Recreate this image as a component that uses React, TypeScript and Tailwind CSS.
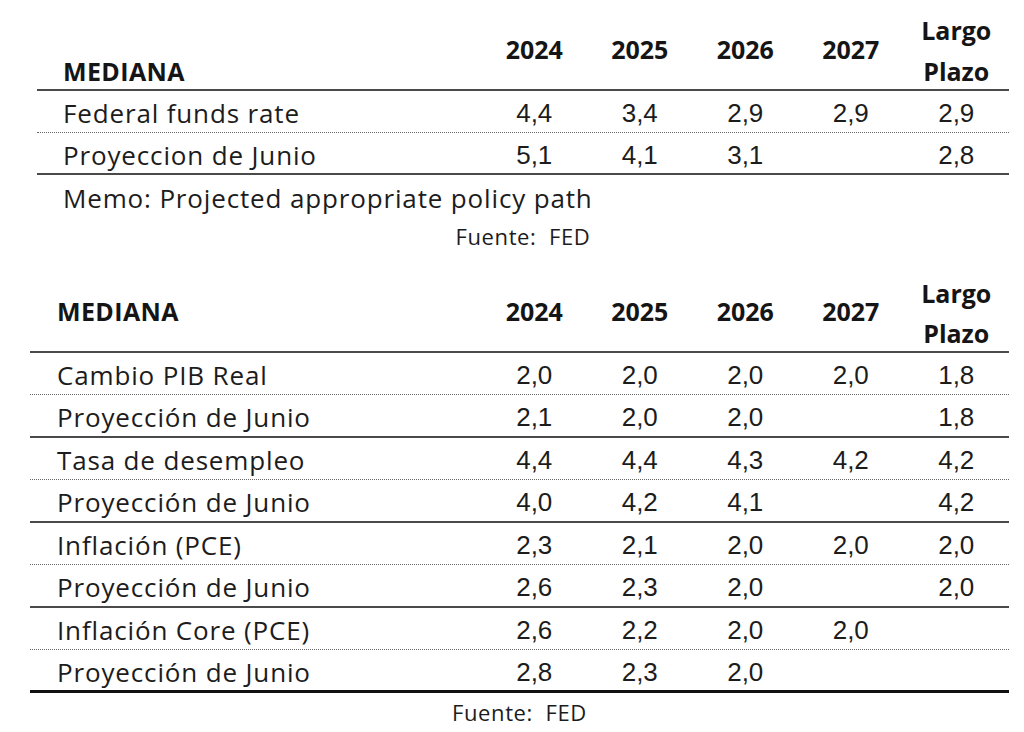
const labelFont = "font-['Open_Sans',sans-serif] text-[26px] tracking-[0.85px] text-[#1c1c1c]";
const boldFont = "font-['Open_Sans',sans-serif] font-bold text-[25px] text-[#151515]";
const numFont = "font-['Liberation_Sans',Arial,sans-serif] text-[26px] text-[#1c1c1c]";

const years = ["2024", "2025", "2026", "2027"];

type Row = { label: string; values: string[] };

const fedRows: Row[] = [
    { label: "Federal funds rate", values: ["4,4", "3,4", "2,9", "2,9", "2,9"] },
    { label: "Proyeccion de Junio", values: ["5,1", "4,1", "3,1", "", "2,8"] },
];

const macroRows: Row[] = [
    { label: "Cambio PIB Real", values: ["2,0", "2,0", "2,0", "2,0", "1,8"] },
    { label: "Proyección de Junio", values: ["2,1", "2,0", "2,0", "", "1,8"] },
    { label: "Tasa de desempleo", values: ["4,4", "4,4", "4,3", "4,2", "4,2"] },
    { label: "Proyección de Junio", values: ["4,0", "4,2", "4,1", "", "4,2"] },
    { label: "Inflación (PCE)", values: ["2,3", "2,1", "2,0", "2,0", "2,0"] },
    { label: "Proyección de Junio", values: ["2,6", "2,3", "2,0", "", "2,0"] },
    { label: "Inflación Core (PCE)", values: ["2,6", "2,2", "2,0", "2,0", ""] },
    { label: "Proyección de Junio", values: ["2,8", "2,3", "2,0", "", ""] },
];

const grid = "grid grid-cols-[1fr_repeat(5,105.5px)]";

const Header = ({ first }: { first: boolean }) => (
    <div
        className={`${grid} border-b-2 border-[#4a4a4a] ${
            first ? "h-[81px]" : "h-[80px]"
        }`}
    >
        <div
            className={`${boldFont} tracking-[0.4px] ${
                first
                    ? "self-end leading-[41px] mb-[-3px] pl-[26px]"
                    : "self-center pl-[27px]"
            }`}
        >
            MEDIANA
        </div>
        {years.map((y) => (
            <div key={y} className={`${boldFont} self-center text-center`}>
                {y}
            </div>
        ))}
        <div
            className={`${boldFont} flex flex-col justify-end text-center ${
                first ? "leading-[41px] mb-[-3px]" : "leading-[40px] mb-[-2px]"
            }`}
        >
            <span>Largo</span>
            <span>Plazo</span>
        </div>
    </div>
);

const DataRow = ({
    row,
    border,
    height,
    pad,
}: {
    row: Row;
    border: string;
    height: string;
    pad: string;
}) => (
    <div className={`${grid} items-center pt-[3px] ${height} ${border}`}>
        <div className={`${labelFont} ${pad} whitespace-nowrap`}>{row.label}</div>
        {row.values.map((v, i) => (
            <div key={i} className={`${numFont} text-center`}>
                {v}
            </div>
        ))}
    </div>
);

const Fuente = ({ height }: { height: string }) => (
    <div
        className={`${height} flex items-center justify-center font-['Open_Sans',sans-serif] text-[22px] tracking-[0.6px] text-[#1c1c1c]`}
    >
        Fuente:&nbsp; FED
    </div>
);

export default function App() {
    return (
        <div className="w-[1024px] h-[732px] bg-white pt-[10px] overflow-hidden">
            <div className="ml-[37px] w-[972px]">
                <Header first />
                <DataRow
                    row={fedRows[0]}
                    height="h-[42px]"
                    border="border-b border-dotted border-[#666]"
                    pad="pl-[26px]"
                />
                <DataRow
                    row={fedRows[1]}
                    height="h-[42px]"
                    border="border-b-2 border-[#4a4a4a]"
                    pad="pl-[26px]"
                />
                <div className={`${labelFont} h-[44px] flex items-center pt-[2px] pl-[26px]`}>
                    Memo: Projected appropriate policy path
                </div>
                <Fuente height="h-[34px]" />
            </div>

            <div className="ml-[30px] w-[979px] mt-[20px]">
                <Header first={false} />
                {macroRows.map((row, i) => {
                    const last = i === macroRows.length - 1;
                    const even = i % 2 === 0;
                    return (
                        <DataRow
                            key={i}
                            row={row}
                            pad="pl-[27px]"
                            height={even ? "h-[42px]" : "h-[43px]"}
                            border={
                                last
                                    ? "border-b-[3px] border-[#111]"
                                    : even
                                    ? "border-b border-dotted border-[#666]"
                                    : "border-b-2 border-[#4a4a4a]"
                            }
                        />
                    );
                })}
                <Fuente height="h-[38px]" />
            </div>
        </div>
    );
}
